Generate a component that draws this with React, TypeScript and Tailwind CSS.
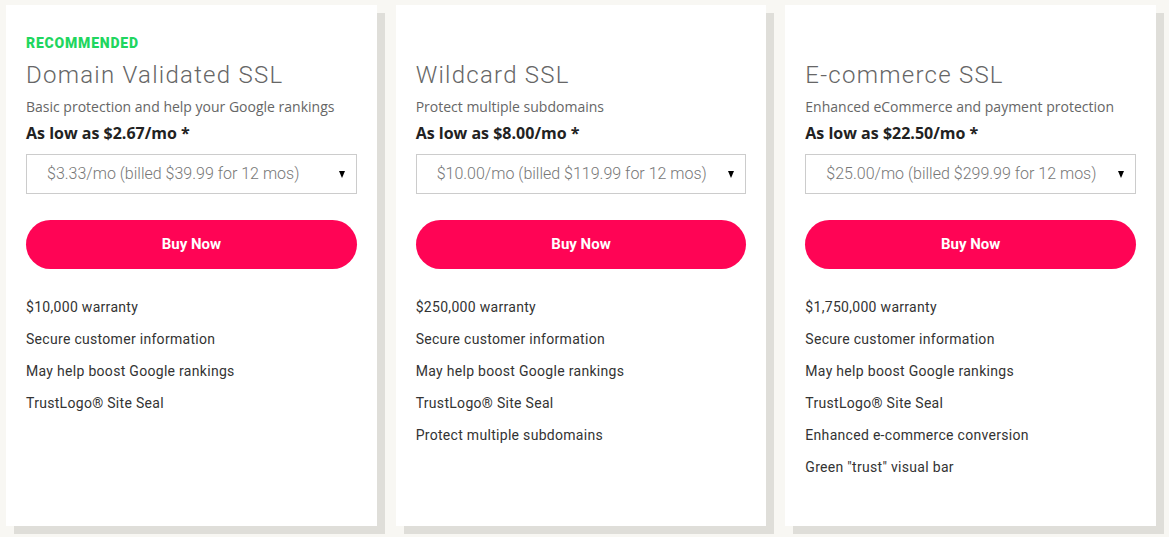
import React from "react";

type Plan = {
  name: string;
  blurb: string;
  lowPrice: string;
  option: string;
  features: string[];
  recommended?: boolean;
};

const plans: Plan[] = [
  {
    name: "Domain Validated SSL",
    blurb: "Basic protection and help your Google rankings",
    lowPrice: "As low as $2.67/mo *",
    option: "$3.33/mo (billed $39.99 for 12 mos)",
    features: [
      "$10,000 warranty",
      "Secure customer information",
      "May help boost Google rankings",
      "TrustLogo® Site Seal",
    ],
    recommended: true,
  },
  {
    name: "Wildcard SSL",
    blurb: "Protect multiple subdomains",
    lowPrice: "As low as $8.00/mo *",
    option: "$10.00/mo (billed $119.99 for 12 mos)",
    features: [
      "$250,000 warranty",
      "Secure customer information",
      "May help boost Google rankings",
      "TrustLogo® Site Seal",
      "Protect multiple subdomains",
    ],
  },
  {
    name: "E-commerce SSL",
    blurb: "Enhanced eCommerce and payment protection",
    lowPrice: "As low as $22.50/mo *",
    option: "$25.00/mo (billed $299.99 for 12 mos)",
    features: [
      "$1,750,000 warranty",
      "Secure customer information",
      "May help boost Google rankings",
      "TrustLogo® Site Seal",
      "Enhanced e-commerce conversion",
      'Green "trust" visual bar',
    ],
  },
];

function PlanCard({ plan }: { plan: Plan }) {
  return (
    <div className="h-[521px] bg-white px-5 pt-[30px] shadow-[8px_8px_0_#dfded9]">
      {/* badge row keeps titles aligned across cards */}
      <div className="h-4 text-[14px] font-black uppercase leading-4 tracking-[0.8px] text-[#1fd65f] [font-family:Roboto,sans-serif]">
        {plan.recommended ? "Recommended" : ""}
      </div>
      <h3 className="mt-[9px] text-[24px] font-light leading-[30px] tracking-[1.25px] text-[#666] [font-family:Roboto,sans-serif]">
        {plan.name}
      </h3>
      <p className="mt-[7px] text-[14px] leading-5 text-[#666] [font-family:'Open_Sans',sans-serif]">
        {plan.blurb}
      </p>
      <p className="mt-[5px] text-[16px] font-bold leading-[22px] text-[#222] [font-family:'Open_Sans',sans-serif]">
        {plan.lowPrice}
      </p>
      <div className="mt-[10px] flex h-10 items-center justify-between border border-[#ccc] pl-5 pr-[11px] [font-family:Roboto,sans-serif]">
        <span className="text-[16px] font-light text-[#777]">{plan.option}</span>
        <svg width="6" height="7" viewBox="0 0 6 7" className="mt-[1px]">
          <path d="M0 0h6L3 7z" fill="#000" />
        </svg>
      </div>
      <button className="mt-[26px] flex h-[49px] w-full items-center justify-center rounded-full bg-[#ff0455] text-[15px] font-bold text-white [font-family:Roboto,sans-serif]">
        Buy Now
      </button>
      <ul className="mt-[22px] text-[14px] leading-8 tracking-[0.3px] text-[#333] [font-family:Roboto,sans-serif]">
        {plan.features.map((f) => (
          <li key={f}>{f}</li>
        ))}
      </ul>
    </div>
  );
}

export default function App() {
  return (
    <div className="h-[537px] w-[1169px] overflow-hidden bg-[#f8f7f3]">
      <div className="ml-[6px] grid w-[1150px] grid-cols-3 gap-[19px] pt-[5px]">
        {plans.map((p) => (
          <PlanCard key={p.name} plan={p} />
        ))}
      </div>
    </div>
  );
}
